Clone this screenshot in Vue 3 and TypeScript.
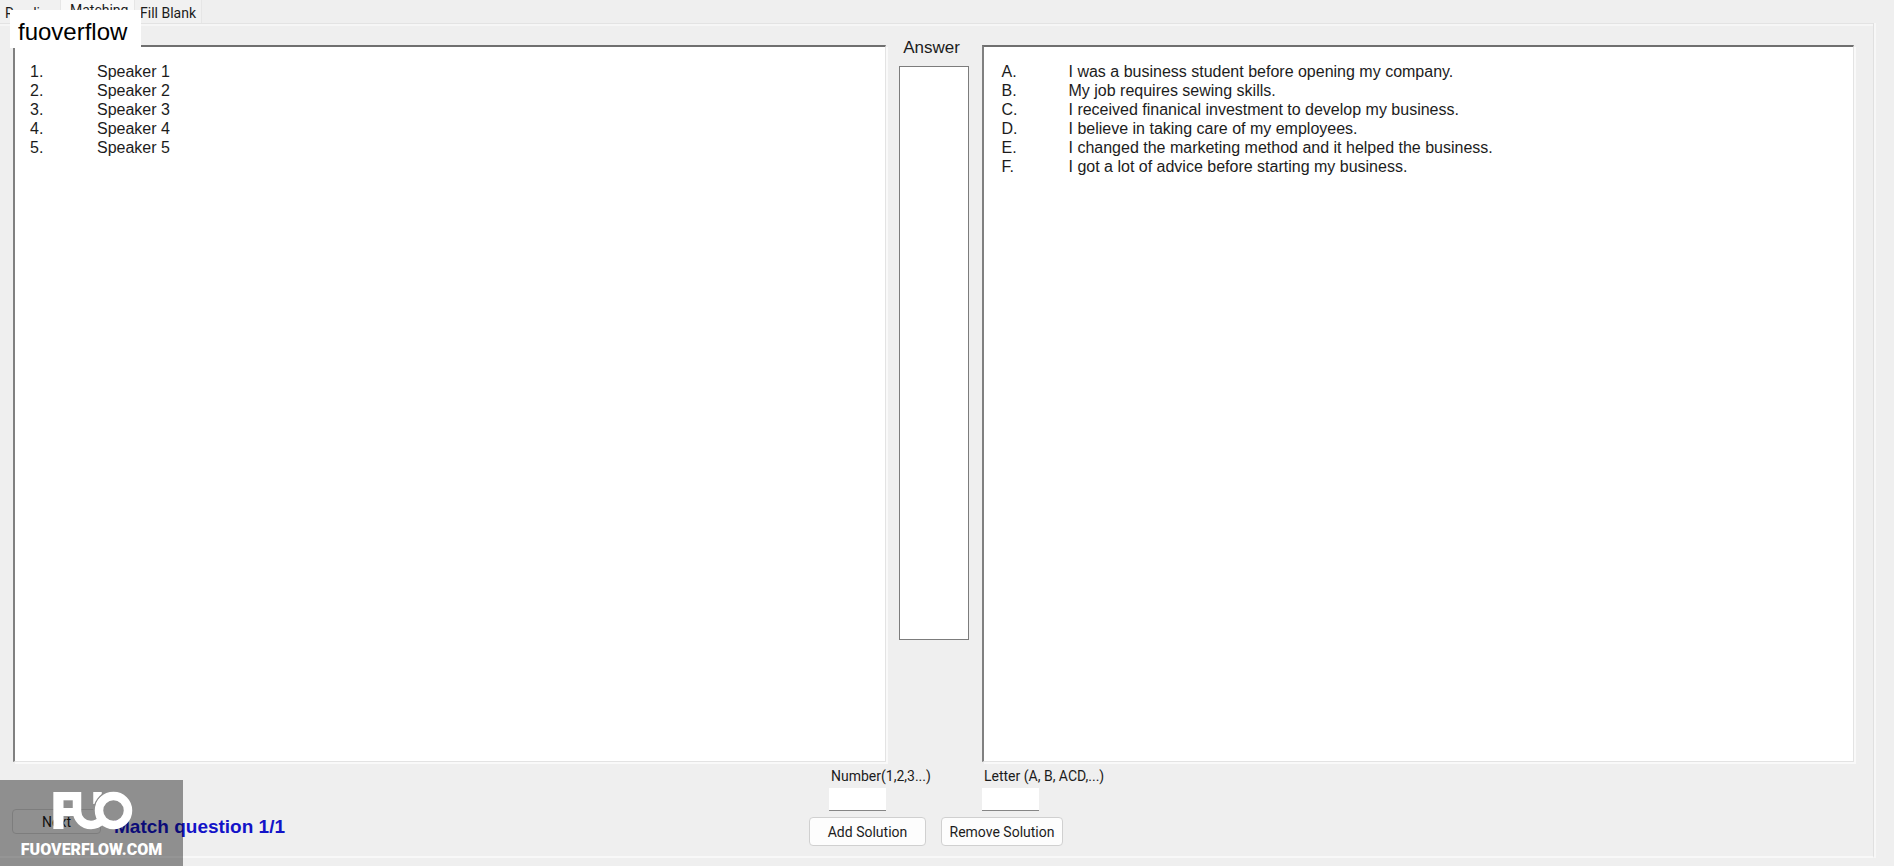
<script setup lang="ts">
interface Item { key: string; text: string }

const speakers: Item[] = [1, 2, 3, 4, 5].map((n) => ({ key: `${n}.`, text: `Speaker ${n}` }))
const statements: Item[] = [
  { key: 'A.', text: 'I was a business student before opening my company.' },
  { key: 'B.', text: 'My job requires sewing skills.' },
  { key: 'C.', text: 'I received finanical investment to develop my business.' },
  { key: 'D.', text: 'I believe in taking care of my employees.' },
  { key: 'E.', text: 'I changed the marketing method and it helped the business.' },
  { key: 'F.', text: 'I got a lot of advice before starting my business.' },
]
const tabs = ['Reading', 'Matching', 'Fill Blank']
const current = 'Matching'
</script>

<template>
  <div class="window">
    <nav class="tabs" role="tablist">
      <button v-for="t in tabs" :key="t" type="button" role="tab" class="tab" :class="{ active: t === current }" :aria-selected="t === current">{{ t }}</button>
    </nav>
    <main class="page">
      <div class="board">
        <section class="sheet">
          <div v-for="s in speakers" :key="s.key" class="row"><span>{{ s.key }}</span><span>{{ s.text }}</span></div>
        </section>
        <section class="answer">
          <label for="answers">Answer</label>
          <select id="answers" class="answer-list" size="10"></select>
        </section>
        <section class="sheet choices">
          <div v-for="s in statements" :key="s.key" class="row"><span>{{ s.key }}</span><span>{{ s.text }}</span></div>
        </section>
      </div>
      <footer class="footer">
        <div class="progress">
          <button type="button" class="btn next">Next</button>
          <span class="status">Match question 1/1</span>
        </div>
        <form class="solution" @submit.prevent>
          <div class="fields">
            <div class="field"><label for="number">Number(1,2,3...)</label><input id="number" type="text" /></div>
            <div class="field"><label for="letter">Letter (A, B, ACD,...)</label><input id="letter" type="text" /></div>
          </div>
          <div class="actions">
            <button type="button" class="btn add">Add Solution</button>
            <button type="button" class="btn remove">Remove Solution</button>
          </div>
        </form>
      </footer>
    </main>
    <div class="tag">fuoverflow</div>
    <div class="brand">
      <svg class="logo" viewBox="0 0 78 38" width="78" height="38" role="img" aria-label="FUO">
        <text x="-3" y="37" class="mark">F</text>
        <path d="M18 0H24V7H18Z" class="join" />
        <path d="M43.5 0V12" class="swoosh" />
        <path d="M23 0V19a14 14 0 0 0 14 14q6 0 11 -5" class="swoosh" />
        <path d="M40 19A19.5 19.5 0 0 1 54 0" class="seam" />
        <circle cx="59.5" cy="18.5" r="14.5" class="swoosh" />
      </svg>
      <span class="site">FUOVERFLOW.COM</span>
    </div>
  </div>
</template>

<style>
body { margin: 0; background: #efefef; }
</style>
<style scoped>
.window { position: relative; display: flex; flex-direction: column; min-height: 100vh; box-sizing: border-box; padding: 0 20px 8px 0; overflow: hidden; background: #efefef; color: #1c1c1c; font: 14px/16px Roboto, "Liberation Sans", Arial, sans-serif; }
.tabs { display: flex; height: 23px; }
.tab { height: 23px; padding: 2px 5px 0; border: 0; border-right: 1px solid #e6e6e6; background: #f1f1f1; color: inherit; font: inherit; text-align: left; white-space: nowrap; }
.tab:first-child { width: 61px; }
.tab.active { width: 74px; padding: 0 9px 3px; background: #f9f9f9; }
.page { flex: 1; display: flex; flex-direction: column; padding: 21px 19px 10px 13px; border-top: 1px solid #e3e3e3; border-right: 1px solid #e0e0e0; border-bottom: 2px solid #f8f8f8; box-shadow: 2px 0 #f7f7f7, inset 0 2px #f6f6f6; }
.board { flex: 1; display: grid; grid-template-columns: 1fr 70px 1fr; gap: 13px; }
.sheet { box-sizing: border-box; padding: 15px; border: 1px solid #e3e3e3; border-top: 2px solid #6f6f6f; border-left: 2px solid #808080; background: #fff; box-shadow: 2px 2px #f9f9f9; font: 16px/19px "Liberation Sans", Arial, sans-serif; }
.choices { padding-left: 18px; }
.row { display: grid; grid-template-columns: 67px 1fr; }
.answer { display: flex; flex-direction: column; align-items: center; padding-bottom: 122px; }
.answer label { margin-top: -7px; padding: 0 4px 8px 0; font: 17px/20px "Liberation Sans", Arial, sans-serif; }
.answer-list { flex: 1; width: 100%; border: 1px solid #7c7c7c; border-radius: 0; background: #fff; overflow: hidden; }
.footer { display: grid; grid-template-columns: 1fr 254px 1fr; padding: 6px 0 0 5px; }
.progress { display: flex; align-items: flex-end; gap: 13px; margin-left: -6px; padding-bottom: 6px; }
.status { color: #1313c8; font: bold 19px/26px "Liberation Sans", Arial, sans-serif; }
.fields { display: grid; grid-template-columns: 153px 1fr; padding-left: 20px; }
.field { display: flex; flex-direction: column; align-items: flex-start; gap: 4px; }
.field label { padding-left: 2px; white-space: nowrap; }
.field input { width: 57px; height: 23px; box-sizing: border-box; border: 0; border-bottom: 1px solid #868686; background: #fff; }
.actions { display: flex; gap: 15px; padding-top: 6px; }
.btn { height: 29px; box-sizing: border-box; padding: 0; border: 1px solid #d0d0d0; border-radius: 4px; background: #fdfdfd; color: inherit; font: inherit; white-space: nowrap; }
.add { width: 117px; }
.remove { width: 122px; }
.next { width: 89px; height: 25px; margin-bottom: 6px; background: #f1f1f1; }
.tag { position: absolute; left: 10px; top: 10px; padding: 8px 14px 2px 8px; background: #fff; color: #000; font: 24px/28px "Liberation Sans", Arial, sans-serif; }
.brand { position: absolute; left: 0; bottom: 0; width: 183px; height: 86px; display: flex; flex-direction: column; align-items: center; background: rgba(0, 0, 0, 0.4); color: #fff; }
.logo { margin: 12px 0 0 3px; overflow: visible; }
.mark { fill: #fff; font: 900 51px Inter, sans-serif; }
.join { fill: #fff; }
.swoosh { fill: none; stroke: #fff; stroke-width: 8.5; }
.seam { fill: none; stroke: #8f8f8f; stroke-width: 1.5; }
.site { margin-top: 8px; font: 900 16px/24px Roboto, "Liberation Sans", Arial, sans-serif; }
</style>
